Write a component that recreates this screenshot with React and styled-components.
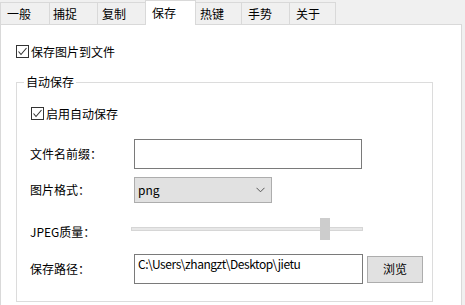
import React from 'react';
import styled, { createGlobalStyle } from 'styled-components';

const GlobalStyle = createGlobalStyle`
    html, body {
        margin: 0;
        padding: 0;
        background: #f0f0f0;
        overflow: hidden;
    }
    body {
        font-family: "Noto Sans CJK SC", "Noto Sans", sans-serif;
        font-size: 12px;
        color: #000;
    }
`;

const Window = styled.div`
    width: 462px;
    height: 305px;
`;

const TabBar = styled.div`
    display: flex;
    align-items: flex-end;
    height: 25px;
    position: relative;
    z-index: 1;
`;

const Tab = styled.div`
    box-sizing: border-box;
    width: ${p => p.w}px;
    height: ${p => (p.active ? 25 : 22)}px;
    margin-bottom: ${p => (p.active ? 0 : 1)}px;
    margin-right: -1px;
    padding-left: ${p => p.pad || 6}px;
    border: 1px solid #d9d9d9;
    border-bottom: none;
    background: ${p => (p.active ? '#fff' : '#f0f0f0')};
    position: relative;
    z-index: ${p => (p.active ? 2 : 1)};
    display: flex;
    align-items: center;
    line-height: 16px;
    padding-bottom: ${p => (p.active ? 1 : 0)}px;
`;

const Panel = styled.div`
    box-sizing: border-box;
    margin-top: -1px;
    height: 290px;
    border: 1px solid #d9d9d9;
    background: #fff;
    padding-top: 20px;
`;

const CheckRow = styled.label`
    display: flex;
    align-items: center;
    height: 13px;
    margin-left: ${p => p.ml || 0}px;
    line-height: 16px;
`;

const Box = styled.span`
    box-sizing: border-box;
    width: 13px;
    height: 13px;
    border: 1px solid #333;
    background: #fff;
    margin-right: 2px;
    display: flex;
    align-items: center;
    justify-content: center;
`;

const Group = styled.fieldset`
    box-sizing: border-box;
    width: 417px;
    min-width: 0;
    margin: 16px 0 0 15px;
    padding: 0 0 17px 13px;
    border: 1px solid #dcdcdc;
`;

const Legend = styled.legend`
    margin-left: -6px;
    padding: 0 2px;
    line-height: 16px;
`;

const Row = styled.div`
    display: flex;
    align-items: center;
    height: ${p => p.h}px;
    margin-top: ${p => p.mt}px;
`;

const Label = styled.div`
    width: 104px;
    flex-shrink: 0;
    line-height: 16px;
    position: relative;
    top: ${p => p.dy || 0}px;
`;

const TextBox = styled.div`
    box-sizing: border-box;
    width: ${p => p.w}px;
    height: ${p => p.h}px;
    border: 1px solid #7a7a7a;
    background: #fff;
    padding: 1px 3px;
    line-height: 16px;
    letter-spacing: -0.45px;
    white-space: nowrap;
    overflow: hidden;
`;

const Select = styled.div`
    box-sizing: border-box;
    width: 138px;
    height: 26px;
    border: 1px solid #adadad;
    background: #e1e1e1;
    display: flex;
    align-items: center;
    justify-content: space-between;
    padding: 0 6px 0 3px;
    line-height: 16px;
`;

const Slider = styled.div`
    position: relative;
    width: 232px;
    height: 23px;
    margin-left: -3px;
    display: flex;
    align-items: center;
`;

const Track = styled.div`
    box-sizing: border-box;
    width: 100%;
    height: 4px;
    background: #e7e7e7;
    border: 1px solid #d6d6d6;
`;

const Thumb = styled.div`
    position: absolute;
    top: 1px;
    width: 10px;
    height: 22px;
    background: #cdcdcd;
`;

const Button = styled.button`
    box-sizing: border-box;
    width: 56px;
    height: 27px;
    margin-left: 4px;
    border: 1px solid #adadad;
    background: #e1e1e1;
    font: inherit;
    color: #000;
    line-height: 16px;
    padding: 0;
`;

const tabs = [
    { name: '一般', w: 50, pad: 6 },
    { name: '捕捉', w: 49, pad: 3 },
    { name: '复制', w: 49, pad: 4 },
    { name: '保存', w: 51, pad: 6, active: true },
    { name: '热键', w: 47, pad: 4 },
    { name: '手势', w: 49, pad: 6 },
    { name: '关于', w: 47, pad: 6 },
];

function Check({ children, ml }) {
    return (
        <CheckRow ml={ml}>
            <Box>
                <svg width="11" height="11" viewBox="0 0 11 11">
                    <polyline points="1.5,5.5 4,8.5 9.5,2" fill="none" stroke="#333" strokeWidth="1.1" />
                </svg>
            </Box>
            {children}
        </CheckRow>
    );
}

export default function App() {
    const quality = 85;
    return (
        <Window>
            <GlobalStyle />
            <TabBar>
                {tabs.map(t => (
                    <Tab key={t.name} w={t.w} pad={t.pad} active={t.active}>{t.name}</Tab>
                ))}
            </TabBar>
            <Panel>
                <Check ml={15}>保存图片到文件</Check>
                <Group>
                    <Legend>自动保存</Legend>
                    <div style={{ height: 17 }} />
                    <Check ml={1}>启用自动保存</Check>
                    <Row h={30} mt={19}>
                        <Label>文件名前缀：</Label>
                        <TextBox w={228} h={30} />
                    </Row>
                    <Row h={26} mt={8}>
                        <Label>图片格式：</Label>
                        <Select>
                            <span>png</span>
                            <svg width="9" height="6" viewBox="0 0 9 6">
                                <polyline points="0.5,0.8 4.5,4.8 8.5,0.8" fill="none" stroke="#555" strokeWidth="1" />
                            </svg>
                        </Select>
                    </Row>
                    <Row h={23} mt={14}>
                        <Label dy={3}>JPEG质量：</Label>
                        <Slider>
                            <Track />
                            <Thumb style={{ left: `${(quality / 100) * 222}px` }} />
                        </Slider>
                    </Row>
                    <Row h={30} mt={14}>
                        <Label>保存路径：</Label>
                        <TextBox w={229} h={30}>C:\Users\zhangzt\Desktop\jietu</TextBox>
                        <Button>浏览</Button>
                    </Row>
                </Group>
            </Panel>
        </Window>
    );
}
